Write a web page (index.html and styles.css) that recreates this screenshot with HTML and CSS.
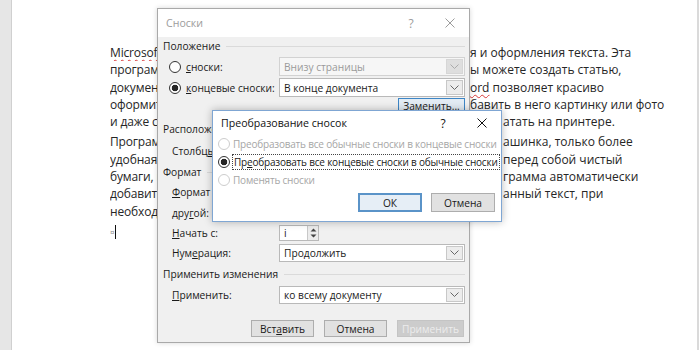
FILE: index.html
```html
<!DOCTYPE html>
<html lang="ru">
<head>
<meta charset="utf-8">
<title>Сноски</title>
<link rel="stylesheet" href="styles.css">
</head>
<body>
<div class="screen">
  <div class="gutter"></div>
  <div class="page">
    <div class="para">
      <div class="ln"><span class="l"><span class="sp">Microsoft</span> Word — это программа для создани</span><span class="r">я и оформления текста. Эта</span></div>
      <div class="ln"><span class="l">программа широко используется, с ее помощью в</span><span class="r">ы можете создать статью,</span></div>
      <div class="ln"><span class="l">документ, реферат или книгу. Программа W</span><span class="r"><span class="sp">ord</span> позволяет красиво</span></div>
      <div class="ln"><span class="l">оформить текст, изменить шрифт, до</span><span class="r">бавить в него картинку или фото</span></div>
      <div class="ln x2"><span class="l">и даже создать таблицу. Готовый документ можно напеч</span><span class="r">атать на принтере.</span></div>
    </div>
    <div class="para">
      <div class="ln x2"><span class="l">Программа Word — это как пишущая м</span><span class="r">ашинка, только более</span></div>
      <div class="ln x2"><span class="l">удобная и умная. Открыв программу, вы видите</span><span class="r"> перед собой чистый</span></div>
      <div class="ln x2"><span class="l">бумаги, на котором можно печатать. Про</span><span class="r">грамма автоматически</span></div>
      <div class="ln x2"><span class="l">добавит переносы и проверит напечат</span><span class="r">анный текст, при</span></div>
      <div class="ln x2"><span class="l">необходимости исправит ошибки.</span></div>
    </div>
    <div class="para">
      <div class="ln"><span class="pm">¤</span><span class="cur"></span></div>
    </div>
  </div>
  <div class="edge"></div>

  <div class="dlg d1">
    <div class="tbar">
      <span class="ttl">Сноски</span>
      <span class="tbtn help">?</span>
      <span class="tbtn close"><svg width="10" height="10" viewBox="0 0 10 10"><path d="M0.5 0.5 L9.5 9.5 M9.5 0.5 L0.5 9.5" stroke="currentColor" stroke-width="1" fill="none"/></svg></span>
    </div>
    <div class="body1">
      <div class="grp">Положение</div>
      <div class="row r1">
        <span class="lbl rad"><span class="rb"></span><span><u>с</u>носки:</span></span>
        <span class="combo dis"><span class="val">Внизу страницы</span><span class="dd"><svg width="9" height="6" viewBox="0 0 9 6"><path d="M0.5 0.5 L4.5 4.5 L8.5 0.5" stroke="currentColor" fill="none"/></svg></span></span>
      </div>
      <div class="row r2">
        <span class="lbl rad"><span class="rb on"></span><span><u>к</u>онцевые сноски:</span></span>
        <span class="combo"><span class="val">В конце документа</span><span class="dd"><svg width="9" height="6" viewBox="0 0 9 6"><path d="M0.5 0.5 L4.5 4.5 L8.5 0.5" stroke="currentColor" fill="none"/></svg></span></span>
      </div>
      <div class="row rbtn"><span class="btn def zam">Заменить...</span></div>
      <div class="grp g2">Расположение</div>
      <div class="row r3"><span class="lbl">Столбц<u>ы</u>:</span></div>
      <div class="grp g3">Формат</div>
      <div class="row r4"><span class="lbl"><u>Ф</u>ормат номера:</span></div>
      <div class="row r5"><span class="lbl">дру<u>г</u>ой:</span></div>
      <div class="row r6">
        <span class="lbl"><u>Н</u>ачать с:</span>
        <span class="spin"><span class="val">i</span><span class="arrows"><svg width="7" height="12" viewBox="0 0 7 12"><path d="M0.5 4.5 L3.5 1.5 L6.5 4.5 Z M0.5 7.5 L3.5 10.5 L6.5 7.5 Z" fill="#444"/></svg></span></span>
      </div>
      <div class="row r7">
        <span class="lbl">Нум<u>е</u>рация:</span>
        <span class="combo"><span class="val">Продолжить</span><span class="dd"><svg width="9" height="6" viewBox="0 0 9 6"><path d="M0.5 0.5 L4.5 4.5 L8.5 0.5" stroke="currentColor" fill="none"/></svg></span></span>
      </div>
      <div class="grp g4">Применить изменения</div>
      <div class="row r8">
        <span class="lbl"><u>П</u>рименить:</span>
        <span class="combo"><span class="val">ко всему документу</span><span class="dd"><svg width="9" height="6" viewBox="0 0 9 6"><path d="M0.5 0.5 L4.5 4.5 L8.5 0.5" stroke="currentColor" fill="none"/></svg></span></span>
      </div>
      <div class="btns">
        <span class="btn b63">Вст<u>а</u>вить</span>
        <span class="btn b63">Отмена</span>
        <span class="btn b67 off">Применить</span>
      </div>
    </div>
  </div>

  <div class="dlg d2">
    <div class="tbar">
      <span class="ttl">Преобразование сносок</span>
      <span class="tbtn help">?</span>
      <span class="tbtn close"><svg width="10" height="10" viewBox="0 0 10 10"><path d="M0.5 0.5 L9.5 9.5 M9.5 0.5 L0.5 9.5" stroke="currentColor" stroke-width="1" fill="none"/></svg></span>
    </div>
    <div class="body2">
      <div class="opt off"><span class="rb dis"></span><span>Преобразовать все обычные сноски в концевые сноски</span></div>
      <div class="opt"><span class="rb on"></span><span class="focus">Пр<u>е</u>образовать все концевые сноски в обычные сноски</span></div>
      <div class="opt off"><span class="rb dis"></span><span>Поменять сноски</span></div>
      <div class="btns2">
        <span class="btn def b64">ОК</span>
        <span class="btn b64">Отмена</span>
      </div>
    </div>
  </div>
</div>
</body>
</html>
```

FILE: styles.css
```css
* { box-sizing: border-box; margin: 0; padding: 0; }
html, body { width: 700px; height: 350px; overflow: hidden; background: #fff; }
body { font-family: "Open Sans", "Noto Sans", sans-serif; color: #1e1e1e; }
u { text-underline-offset: 1px; text-decoration-thickness: 1px; }

.screen { position: relative; width: 700px; height: 350px; display: flex; }
.gutter { width: 12px; flex: none; background: #e6e6e6; border-right: 1px solid #d0d0d0; }
.page { flex: 1; padding: 44px 0 0 98px; font-size: 12px; line-height: 17.3px; color: #262626; }
.edge { width: 3px; flex: none; border-left: 2px solid #dadada; }

.para { margin-bottom: 3px; }
.ln { display: flex; white-space: nowrap; height: 17.3px; align-items: center; }
.ln .l { width: 360px; overflow: hidden; flex: none; letter-spacing: -0.15px; }
.ln.x2 .l { width: 393px; }
.sp { text-decoration: underline wavy #d83a3a; text-decoration-thickness: 1px; text-underline-offset: 2px; }
.pm { font-size: 8px; color: #8a8a8a; }
.cur { width: 1px; height: 14px; background: #111; }

/* dialogs */
.dlg { position: absolute; display: flex; flex-direction: column; font-size: 10.2px; color: #1a1a1a; }
.tbar { display: flex; align-items: center; background: #fff; flex: none; padding-right: 4px; }
.ttl { flex: 1; font-size: 10.6px; }
.tbtn { width: 30px; display: flex; justify-content: center; align-items: center; font-size: 12px; }
.help { margin-right: 9px; }

.d1 { left: 157px; top: 8px; width: 313px; height: 335px; background: #f0f0f0; border: 1px solid #a9a9a9; box-shadow: 0 0 5px rgba(0,0,0,.16); }
.d1 .tbar { height: 28px; padding-left: 8px; color: #9c9c9c; }
.body1 { padding: 0 4px 0 5px; display: flex; flex-direction: column; }

.grp { display: flex; align-items: center; height: 18px; flex: none; }
.grp::after { content: ""; flex: 1; height: 1px; background: #dadada; margin-left: 6px; }
.g2 { margin-top: 6px; }
.g3 { margin-top: 3px; }
.g4 { margin-top: 3px; }

.row { display: flex; align-items: center; height: 18px; flex: none; }
.r1 { margin-top: 2px; height: 19px; }
.r2 { margin-top: 2px; height: 19px; }
.rbtn { margin-top: 1px; height: 16px; justify-content: flex-end; }
.r3 { margin-top: 4px; }
.r4 { margin-top: 2px; }
.r5 { margin-top: 3px; }
.r6 { margin-top: 2px; }
.r7 { margin-top: 2px; }
.r8 { margin-top: 3px; }

.lbl { width: 116px; flex: none; padding-left: 9px; white-space: nowrap; }
.lbl.rad { padding-left: 6px; display: flex; align-items: center; gap: 5px; }

.rb { width: 12px; height: 12px; flex: none; border-radius: 50%; border: 1px solid #333; background: #fff; }
.rb.on { background: radial-gradient(circle, #262626 0 3px, #fff 3.6px); }
.rb.dis { border-color: #cdcdcd; }

.combo { flex: 1; height: 100%; display: flex; align-items: center; background: #fff; border: 1px solid #b9b9b9; }
.combo .val { flex: 1; padding-left: 4px; white-space: nowrap; }
.combo .dd { width: 17px; height: calc(100% - 2px); margin-right: 1px; display: flex; align-items: center; justify-content: center; background: #ececec; border: 1px solid #c8c8c8; color: #666; }
.combo.dis { background: #f6f6f6; border-color: #d2d2d2; color: #9a9a9a; }
.combo.dis .dd { background: #dedede; border-color: #d6d6d6; color: #aaa; }

.spin { width: 40px; height: 16px; display: flex; align-items: center; background: #fff; border: 1px solid #b9b9b9; }
.spin .val { flex: 1; padding-left: 4px; }
.spin .arrows { width: 11px; height: 100%; display: flex; align-items: center; justify-content: center; background: #ececec; border-left: 1px solid #c8c8c8; }

.btn { display: flex; align-items: center; justify-content: center; height: 17px; background: #e1e1e1; border: 1px solid #adadad; white-space: nowrap; }
.btn.def { border-color: #3d86c6; background: #e3ecf4; }
.zam { width: 67px; height: 16px; }
.btns { display: flex; justify-content: flex-end; gap: 10px; margin-top: 16px; margin-right: 1px; }
.b63 { width: 63px; }
.b67 { width: 67px; }
.btn.off { background: #cccccc; border-color: #c4c4c4; color: #ececec; }

.d2 { left: 212px; top: 110px; width: 290px; height: 112px; background: #fff; border: 1px solid #7fa6d3; box-shadow: 0 0 8px rgba(0,0,0,.28); }
.d2 .tbar { height: 24px; padding-left: 8px; color: #111; }
.body2 { display: flex; flex-direction: column; padding: 0 6px 0 5px; }
.opt { display: flex; align-items: center; gap: 3px; height: 18px; white-space: nowrap; font-size: 10px; letter-spacing: -0.2px; }
.opt.off { color: #a6a6a6; }
.focus { outline: 1px dotted #444; outline-offset: 0; padding: 0 1px; }
.btns2 { display: flex; justify-content: flex-end; gap: 9px; margin-top: 4px; }
.b64 { width: 64px; height: 19px; }
.d2 .btn.def { border: 2px solid #5a93c8; background: #e6eef6; }
```
